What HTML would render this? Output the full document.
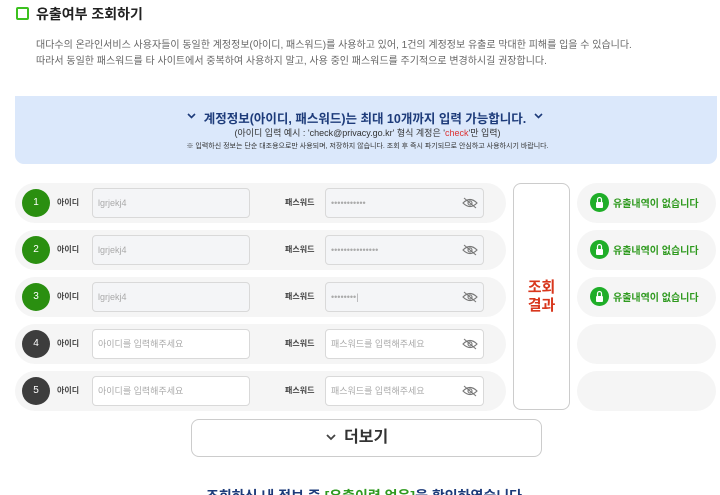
<!DOCTYPE html>
<html><head><meta charset="utf-8"><style>
*{margin:0;padding:0;box-sizing:border-box}
html,body{width:720px;height:495px;overflow:hidden}
body{background:#fff;font-family:"Liberation Sans","Noto Sans CJK KR",sans-serif;position:relative;color:#333}
.a{position:absolute;white-space:nowrap}
.row{position:absolute;left:15px;width:491px;height:40px;background:#f5f5f5;border-radius:20px}
.num{position:absolute;left:7px;top:6px;width:28px;height:28px;border-radius:50%;color:#fff;font-size:10px;text-align:center;line-height:28px}
.lbl{position:absolute;font-size:8px;font-weight:bold;color:#444;top:14px}
.inp{position:absolute;top:5px;height:30px;border:1px solid #d9d9d9;border-radius:4px;font-size:9px;color:#aaa;padding-left:5px;line-height:28px}
.st{position:absolute;left:577px;width:139px;height:40px;background:#f5f5f5;border-radius:20px}
.lock{position:absolute;left:13px;top:10px;width:19px;height:19px;border-radius:50%;background:#1fae28}
.st span{position:absolute;left:36px;top:12px;font-size:10px;font-weight:bold;color:#2f9a1f}
</style></head><body>
<div class="a" style="left:16px;top:7px;width:13px;height:13px;border:2px solid #3cc11f;border-radius:2px"></div>
<div class="a" style="left:36px;top:4px;font-size:14px;font-weight:bold;color:#222">유출여부 조회하기</div>
<div class="a" style="left:36px;top:36px;font-size:10px;color:#666">대다수의 온라인서비스 사용자들이 동일한 계정정보(아이디, 패스워드)를 사용하고 있어, 1건의 계정정보 유출로 막대한 피해를 입을 수 있습니다.</div>
<div class="a" style="left:36px;top:52px;font-size:10px;color:#666">따라서 동일한 패스워드를 타 사이트에서 중복하여 사용하지 말고, 사용 중인 패스워드를 주기적으로 변경하시길 권장합니다.</div>
<div class="a" style="left:15px;top:96px;width:702px;height:68px;background:#dbe8fb;border-radius:0 0 9px 9px"></div>
<div class="a" style="left:0;width:730px;text-align:center;top:108px;font-size:12.5px;font-weight:bold;color:#1d3b7a">계정정보(아이디, 패스워드)는 최대 10개까지 입력 가능합니다.</div>
<svg class="a" style="left:0;top:0" width="720" height="200" fill="none" stroke="#1d3b7a" stroke-width="1.6">
<path d="M188 114 L191.5 117.5 L195 114"/><path d="M535 114 L538.5 117.5 L542 114"/>
</svg>
<div class="a" style="left:0;width:735px;text-align:center;top:126px;font-size:9px;color:#333">(아이디 입력 예시 : 'check@privacy.go.kr' 형식 계정은 '<span style="color:#d33">check</span>'만 입력)</div>
<div class="a" style="left:0;width:735px;text-align:center;top:141px;font-size:7px;color:#333">※ 입력하신 정보는 단순 대조용으로만 사용되며, 저장하지 않습니다. 조회 후 즉시 파기되므로 안심하고 사용하시기 바랍니다.</div>

<div class="row" style="top:183px"><div class="num" style="background:#2a8f10">1</div><div class="lbl" style="left:42px">아이디</div><div class="inp" style="left:77px;width:158px;background:#f4f5f7">lgrjekj4</div><div class="lbl" style="left:270px">패스워드</div><div class="inp" style="left:310px;width:159px;background:#f4f5f7">•••••••••••</div></div>
<div class="row" style="top:230px"><div class="num" style="background:#2a8f10">2</div><div class="lbl" style="left:42px">아이디</div><div class="inp" style="left:77px;width:158px;background:#f4f5f7">lgrjekj4</div><div class="lbl" style="left:270px">패스워드</div><div class="inp" style="left:310px;width:159px;background:#f4f5f7">•••••••••••••••</div></div>
<div class="row" style="top:277px"><div class="num" style="background:#2a8f10">3</div><div class="lbl" style="left:42px">아이디</div><div class="inp" style="left:77px;width:158px;background:#f4f5f7">lgrjekj4</div><div class="lbl" style="left:270px">패스워드</div><div class="inp" style="left:310px;width:159px;background:#f4f5f7">••••••••|</div></div>
<div class="row" style="top:324px"><div class="num" style="background:#3d3d3d">4</div><div class="lbl" style="left:42px">아이디</div><div class="inp" style="left:77px;width:158px;background:#fff">아이디를 입력해주세요</div><div class="lbl" style="left:270px">패스워드</div><div class="inp" style="left:310px;width:159px;background:#fff">패스워드를 입력해주세요</div></div>
<div class="row" style="top:371px"><div class="num" style="background:#3d3d3d">5</div><div class="lbl" style="left:42px">아이디</div><div class="inp" style="left:77px;width:158px;background:#fff">아이디를 입력해주세요</div><div class="lbl" style="left:270px">패스워드</div><div class="inp" style="left:310px;width:159px;background:#fff">패스워드를 입력해주세요</div></div>

<svg class="a" style="left:0;top:0" width="720" height="495">
<g fill="none" stroke="#777" stroke-width="1.1">
<g id="e"><path d="M463 203 Q470 196 477 203 Q470 210 463 203Z"/><circle cx="470" cy="203" r="2"/><path d="M464 198 L476 208"/></g>
<use href="#e" y="47"/><use href="#e" y="94"/><use href="#e" y="141"/><use href="#e" y="188"/>
</g>
</svg>

<div class="a" style="left:513px;top:183px;width:57px;height:227px;border:1px solid #ccc;border-radius:8px;background:#fff"></div>
<div class="a" style="left:513px;top:279px;width:57px;text-align:center;font-size:15px;font-weight:bold;color:#d8371d;line-height:18px;white-space:normal">조회<br>결과</div>

<div class="st" style="top:183px"><div class="lock"></div><span>유출내역이 없습니다</span></div>
<div class="st" style="top:230px"><div class="lock"></div><span>유출내역이 없습니다</span></div>
<div class="st" style="top:277px"><div class="lock"></div><span>유출내역이 없습니다</span></div>
<div class="st" style="top:324px"></div>
<div class="st" style="top:371px"></div>
<svg class="a" style="left:0;top:0" width="720" height="495" fill="#fff">
<g id="l"><rect x="596" y="202" width="7" height="6" rx="1"/><path d="M597.5 202 V199.5 A2 2 0 0 1 601.5 199.5 V202" fill="none" stroke="#fff" stroke-width="1.2"/></g>
<use href="#l" y="47"/><use href="#l" y="94"/>
</svg>

<div class="a" style="left:344px;top:419px;height:38px;line-height:38px;font-size:16px;font-weight:bold;color:#333">더보기</div>
<div class="a" style="left:191px;top:419px;width:351px;height:38px;border:1px solid #ccc;border-radius:8px"></div>
<svg class="a" style="left:0;top:0" width="720" height="495" fill="none" stroke="#444" stroke-width="1.8">
<path d="M327 435 L331 439 L335 435"/>
</svg>
<div class="a" style="left:0;width:728px;text-align:center;top:486px;font-size:14px;font-weight:bold;color:#1d3b7a">조회하신 내 정보 중 <span style="color:#2f9a1f">[유출이력 없음]</span>을 확인하였습니다</div>
</body></html>
